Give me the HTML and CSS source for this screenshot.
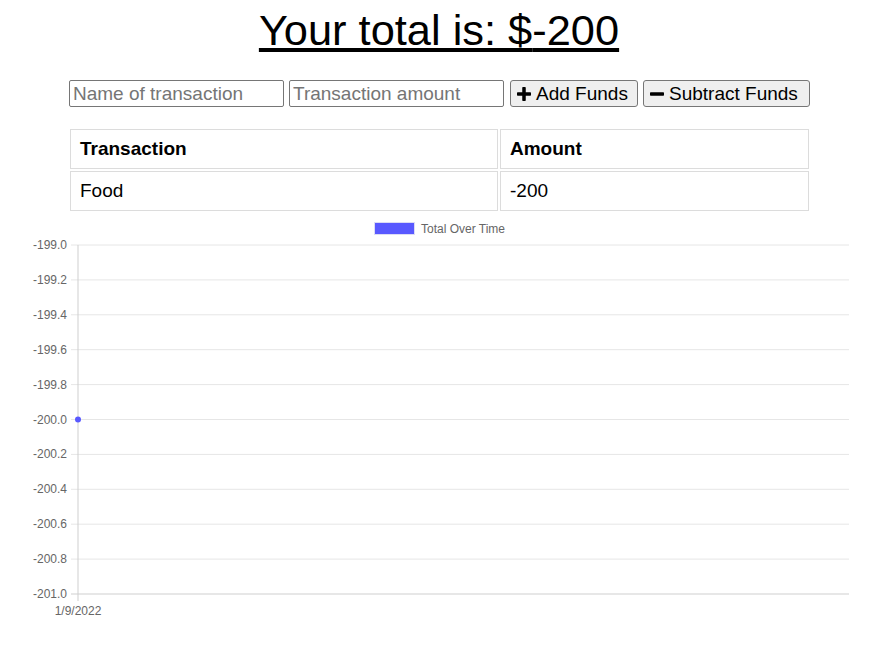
FILE: index.html
```html
<!DOCTYPE html>
<html>
<head>
<meta charset="utf-8">
<title>Budget Tracker</title>
<link rel="stylesheet" href="styles.css">
</head>
<body>
<div class="wrap">
  <h1 class="total">Your total is: $<span id="total">-200</span></h1>
  <div class="form">
    <input class="field" type="text" placeholder="Name of transaction">
    <input class="field" type="number" placeholder="Transaction amount">
    <button class="btn btn-add"><svg class="ico" viewBox="0 0 12 12"><path d="M4.5 0.6Q4.5 0 5.1 0H6.9Q7.5 0 7.5 0.6V4.5H11.4Q12 4.5 12 5.1V6.9Q12 7.5 11.4 7.5H7.5V11.4Q7.5 12 6.9 12H5.1Q4.5 12 4.5 11.4V7.5H0.6Q0 7.5 0 6.9V5.1Q0 4.5 0.6 4.5H4.5Z"/></svg>Add Funds</button>
    <button class="btn btn-sub"><svg class="ico" viewBox="0 0 12 12"><rect x="0" y="4.5" width="12" height="3" rx="0.6"/></svg>Subtract Funds</button>
  </div>
  <table class="tx">
    <thead>
      <tr><th class="c1">Transaction</th><th class="c2">Amount</th></tr>
    </thead>
    <tbody>
      <tr><td>Food</td><td>-200</td></tr>
    </tbody>
  </table>
</div>
<svg class="chart" width="883" height="440" viewBox="0 0 883 440">
  <g class="grid">
    <line x1="71" y1="32" x2="849" y2="32"/>
    <line x1="71" y1="66.9" x2="849" y2="66.9"/>
    <line x1="71" y1="101.8" x2="849" y2="101.8"/>
    <line x1="71" y1="136.7" x2="849" y2="136.7"/>
    <line x1="71" y1="171.6" x2="849" y2="171.6"/>
    <line x1="71" y1="206.5" x2="849" y2="206.5"/>
    <line x1="71" y1="241.4" x2="849" y2="241.4"/>
    <line x1="71" y1="276.3" x2="849" y2="276.3"/>
    <line x1="71" y1="311.2" x2="849" y2="311.2"/>
    <line x1="71" y1="346.1" x2="849" y2="346.1"/>
  </g>
  <line class="axis" x1="71" y1="381" x2="849" y2="381"/>
  <line class="axis" x1="78" y1="32" x2="78" y2="388"/>
  <g class="ylab">
    <text x="67" y="36">-199.0</text>
    <text x="67" y="70.9">-199.2</text>
    <text x="67" y="105.8">-199.4</text>
    <text x="67" y="140.7">-199.6</text>
    <text x="67" y="175.6">-199.8</text>
    <text x="67" y="210.5">-200.0</text>
    <text x="67" y="245.4">-200.2</text>
    <text x="67" y="280.3">-200.4</text>
    <text x="67" y="315.2">-200.6</text>
    <text x="67" y="350.1">-200.8</text>
    <text x="67" y="385">-201.0</text>
  </g>
  <text class="xlab" x="78" y="402">1/9/2022</text>
  <rect class="legend-box" x="374.5" y="9.5" width="40" height="12"/>
  <text class="legend-text" x="421" y="20">Total Over Time</text>
  <circle class="pt" cx="78" cy="206.5" r="3"/>
</svg>
</body>
</html>
```
FILE: styles.css
```css
html, body {
  margin: 0;
  padding: 0;
  background: #fff;
  font-family: "Liberation Sans", Arial, sans-serif;
  color: #000;
}
.wrap {
  width: 743px;
  margin-left: 68px;
  display: flex;
  flex-direction: column;
}
.total {
  margin: 0;
  padding-top: 6px;
  font-size: 43.4px;
  line-height: 49px;
  font-weight: normal;
  text-decoration: underline;
  text-align: center;
  padding-right: 1px;
}
.form {
  margin-top: 25px;
  margin-left: 1px;
  display: flex;
  gap: 5px;
  height: 27px;
}
.field {
  box-sizing: border-box;
  width: 215px;
  height: 27px;
  margin: 0;
  padding: 1px 3px;
  border: 1px solid #767676;
  border-radius: 2px;
  font-family: "Liberation Sans", Arial, sans-serif;
  font-size: 19px;
  color: #000;
  background: #fff;
}
.field::placeholder {
  color: #757575;
}
.field::-webkit-outer-spin-button,
.field::-webkit-inner-spin-button {
  -webkit-appearance: none;
  margin: 0;
}
.btn {
  box-sizing: border-box;
  height: 27px;
  margin: 0;
  padding: 0 6px;
  display: flex;
  align-items: center;
  gap: 5px;
  border: 1px solid #767676;
  border-radius: 3px;
  background: #efefef;
  font-family: "Liberation Sans", Arial, sans-serif;
  font-size: 19px;
  color: #000;
}
.btn-add {
  width: 128px;
  margin-left: 1px;
}
.btn-sub {
  width: 167px;
}
.ico {
  width: 14px;
  height: 14px;
  fill: #000;
  flex: none;
}
.tx {
  margin-top: 20px;
  width: 743px;
  border-collapse: separate;
  border-spacing: 2px;
  font-size: 19px;
}
.tx th, .tx td {
  border: 1px solid #dcdcdc;
  padding: 8px 9px;
  line-height: 22px;
  text-align: left;
}
.tx th {
  font-weight: bold;
}
.c1 {
  width: 408px;
}
.chart {
  display: block;
  margin-top: 0;
}
.grid line {
  stroke: #e6e6e6;
  stroke-width: 1;
}
.axis {
  stroke: #cfcfcf;
  stroke-width: 1;
}
.ylab text {
  font-family: "Liberation Sans", Arial, sans-serif;
  font-size: 12px;
  fill: #666;
  text-anchor: end;
}
.xlab {
  font-family: "Liberation Sans", Arial, sans-serif;
  font-size: 12px;
  fill: #666;
  text-anchor: middle;
}
.legend-box {
  fill: #5959ff;
  stroke: #dcdcf5;
  stroke-width: 1;
}
.legend-text {
  font-family: "Liberation Sans", Arial, sans-serif;
  font-size: 12px;
  fill: #666;
}
.pt {
  fill: #5959ff;
}
```
